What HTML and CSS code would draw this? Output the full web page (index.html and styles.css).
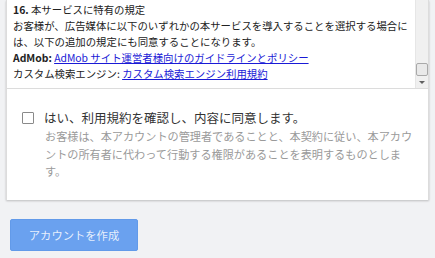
FILE: index.html
```html
<!DOCTYPE html>
<html lang="ja">
  <head>
    <meta charset="UTF-8" />
    <meta name="viewport" content="width=device-width, initial-scale=1.0" />
    <title>アカウントを作成</title>
    <link rel="stylesheet" href="styles.css">
  </head>
  <body>
    <div class="page">
      <div class="card">
        <div class="terms">
          <div class="terms-text">
            <p><b>16.</b> 本サービスに特有の規定</p>
            <p>お客様が、広告媒体に以下のいずれかの本サービスを導入することを選択する場合には、以下の追加の規定にも同意することになります。</p>
            <p><b>AdMob:</b> <a href="#">AdMob サイト運営者様向けのガイドラインとポリシー</a></p>
            <p>カスタム検索エンジン: <a href="#">カスタム検索エンジン利用規約</a></p>
          </div>
          <div class="scrollbar">
            <div class="thumb"></div>
            <div class="arrow-down"></div>
          </div>
        </div>
        <div class="agree">
          <label class="agree-row">
            <span class="checkbox"></span>
            <span class="agree-label">はい、利用規約を確認し、内容に同意します。</span>
          </label>
          <p class="agree-desc">お客様は、本アカウントの管理者であることと、本契約に従い、本アカウントの所有者に代わって行動する権限があることを表明するものとします。</p>
        </div>
      </div>
      <div class="actions">
        <button type="button" class="create-button">アカウントを作成</button>
      </div>
    </div>
  </body>
</html>
```

FILE: styles.css
```css
body {
  margin: 0;
  background-color: #f1f2f4;
  font-family: "Noto Sans CJK JP", "Noto Sans", sans-serif;
  color: #222;
}
.page {
  padding: 0 6px 0 6px;
  width: 423px;
}
.card {
  background-color: #fff;
  border-left: 1px solid #dcdcdc;
  border-right: 1px solid #dcdcdc;
  box-shadow: 0 1px 2px rgba(0, 0, 0, 0.22);
}
.terms {
  display: flex;
  height: 88px;
  border-bottom: 1px solid #dcdcdc;
  overflow: hidden;
}
.terms-text {
  flex: 1;
  padding: 2px 0 0 6px;
  font-size: 10.4px;
  line-height: 16px;
}
.terms-text p {
  margin: 0;
}
.terms-text a {
  color: #1a1ad6;
  text-decoration: underline;
}
.scrollbar {
  width: 12px;
  background-color: #f0f0f0;
  border-left: 1px solid #e6e6e6;
  display: flex;
  flex-direction: column;
  align-items: center;
  padding-top: 63px;
}
.thumb {
  width: 10px;
  height: 11px;
  background-color: #e9e9e9;
  border: 1px solid #a9a9a9;
  border-radius: 2px;
}
.arrow-down {
  margin-top: 5px;
  width: 0;
  height: 0;
  border-left: 3px solid transparent;
  border-right: 3px solid transparent;
  border-top: 3px solid #606060;
}
.agree {
  padding: 21px 13px 19px 15px;
}
.agree-row {
  display: flex;
  align-items: center;
  gap: 10px;
}
.checkbox {
  width: 10px;
  height: 10px;
  border: 1.5px solid #8a8a8a;
  border-radius: 1px;
  flex-shrink: 0;
}
.agree-label {
  font-size: 12.5px;
  line-height: 15px;
  color: #333;
}
.agree-desc {
  margin: 3px 0 0 23px;
  font-size: 11.15px;
  line-height: 17.5px;
  color: #9a9a9a;
}
.actions {
  padding: 19px 0 0 4px;
}
.create-button {
  width: 128px;
  height: 32px;
  background-color: #6aa1ef;
  border: 1px solid #629ae9;
  border-radius: 2px;
  color: rgba(255, 255, 255, 0.85);
  font-family: "Noto Sans CJK JP", "Noto Sans", sans-serif;
  font-size: 11.3px;
  padding: 0;
}
```
